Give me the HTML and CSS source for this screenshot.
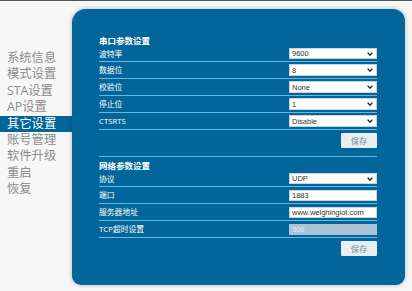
FILE: index.html
```html
<!DOCTYPE html>
<html lang="zh">
<head>
<meta charset="utf-8">
<title>其它设置</title>
<link rel="stylesheet" href="styles.css">
</head>
<body>
<div class="page">
  <nav class="sidebar">
    <div class="item">系统信息</div>
    <div class="item">模式设置</div>
    <div class="item">STA设置</div>
    <div class="item">AP设置</div>
    <div class="item active">其它设置</div>
    <div class="item">账号管理</div>
    <div class="item">软件升级</div>
    <div class="item">重启</div>
    <div class="item">恢复</div>
  </nav>
  <main class="panel">
    <section class="group">
      <div class="title">串口参数设置</div>
      <div class="row first">
        <span class="label">波特率</span>
        <div class="sel"><select><option>9600</option></select><svg class="chev" viewBox="0 0 6 4" width="6" height="4"><polyline points="0.6,0.6 3,3.2 5.4,0.6"/></svg></div>
      </div>
      <div class="row">
        <span class="label">数据位</span>
        <div class="sel"><select><option>8</option></select><svg class="chev" viewBox="0 0 6 4" width="6" height="4"><polyline points="0.6,0.6 3,3.2 5.4,0.6"/></svg></div>
      </div>
      <div class="row">
        <span class="label">校验位</span>
        <div class="sel"><select><option>None</option></select><svg class="chev" viewBox="0 0 6 4" width="6" height="4"><polyline points="0.6,0.6 3,3.2 5.4,0.6"/></svg></div>
      </div>
      <div class="row">
        <span class="label">停止位</span>
        <div class="sel"><select><option>1</option></select><svg class="chev" viewBox="0 0 6 4" width="6" height="4"><polyline points="0.6,0.6 3,3.2 5.4,0.6"/></svg></div>
      </div>
      <div class="row">
        <span class="label">CTSRTS</span>
        <div class="sel"><select><option>Disable</option></select><svg class="chev" viewBox="0 0 6 4" width="6" height="4"><polyline points="0.6,0.6 3,3.2 5.4,0.6"/></svg></div>
      </div>
      <div class="actions"><button class="btn">保存</button></div>
    </section>
    <section class="group net">
      <div class="title">网络参数设置</div>
      <div class="row first">
        <span class="label">协议</span>
        <div class="sel"><select><option>UDP</option></select><svg class="chev" viewBox="0 0 6 4" width="6" height="4"><polyline points="0.6,0.6 3,3.2 5.4,0.6"/></svg></div>
      </div>
      <div class="row">
        <span class="label">端口</span>
        <input class="field" type="text" value="1883">
      </div>
      <div class="row">
        <span class="label">服务器地址</span>
        <input class="field" type="text" value="www.weighingiot.com">
      </div>
      <div class="row">
        <span class="label">TCP超时设置</span>
        <input class="field" type="text" value="300" disabled>
      </div>
      <div class="actions"><button class="btn">保存</button></div>
    </section>
  </main>
</div>
</body>
</html>
```
FILE: styles.css
```css
* { box-sizing: border-box; }
html, body { margin: 0; padding: 0; }
body {
  width: 412px;
  height: 291px;
  overflow: hidden;
  background: #f7f7f7;
  border-top: 1px solid #555;
  font-family: "Open Sans", "Noto Sans CJK SC", sans-serif;
}
.page {
  display: flex;
  align-items: flex-start;
}
.sidebar {
  width: 72px;
  padding-top: 49px;
  display: flex;
  flex-direction: column;
}
.item {
  height: 16.4px;
  line-height: 16.4px;
  padding-left: 7px;
  font-size: 12.3px;
  color: #8c8c8c;
  white-space: nowrap;
}
.item.active {
  background: #03669a;
  color: #fff;
}
.panel {
  margin-top: 8px;
  width: 333px;
  height: 276px;
  background: #03669a;
  border-radius: 14px 12px 9px 9px;
  box-shadow: 0 0 5px rgba(0, 0, 0, 0.28);
  padding: 26px 28px 0 27px;
  color: #fff;
}
.group.net {
  margin-top: 8px;
  border-top: 1px solid #66b6e6;
  padding-top: 3px;
}
.title {
  height: 11px;
  line-height: 11px;
  font-size: 8.5px;
  font-weight: bold;
}
.row {
  height: 17px;
  border-bottom: 1px solid #66b6e6;
  display: flex;
  align-items: center;
  justify-content: space-between;
}
.row.first { height: 16px; }
.label {
  font-size: 7.8px;
  line-height: 10px;
}
.sel {
  position: relative;
  width: 88px;
  height: 11.5px;
  font-size: 0;
  line-height: 0;
}
.sel select {
  display: block;
  appearance: none;
  -webkit-appearance: none;
  width: 100%;
  height: 100%;
  margin: 0;
  border: 1px solid #c9d3da;
  border-radius: 0;
  background: #fff;
  color: #333;
  font-family: "Liberation Sans", Arial, sans-serif;
  font-size: 7.5px;
  padding: 0 0 0 2px;
  line-height: 9px;
  outline: none;
}
.chev {
  position: absolute;
  right: 4px;
  top: 4px;
  fill: none;
  stroke: #222;
  stroke-width: 1.4;
  pointer-events: none;
}
.field {
  display: block;
  width: 88px;
  height: 11px;
  margin: 0;
  border: 1px solid #c9d3da;
  border-radius: 0;
  background: #fff;
  color: #333;
  font-family: "Liberation Sans", Arial, sans-serif;
  font-size: 7.5px;
  padding: 0 0 0 2px;
  outline: none;
}
.field:disabled {
  background: #a9c4d6;
  border-color: #a9c4d6;
  color: #e4edf3;
}
.actions {
  display: flex;
  justify-content: flex-end;
  padding-top: 3px;
}
.btn {
  width: 36px;
  height: 15px;
  margin: 0;
  padding: 0;
  border: none;
  border-radius: 1px;
  background: #e9eef2;
  color: #6f8ca4;
  font-family: "Noto Sans CJK SC", sans-serif;
  font-size: 8.3px;
  line-height: 15px;
}
```
